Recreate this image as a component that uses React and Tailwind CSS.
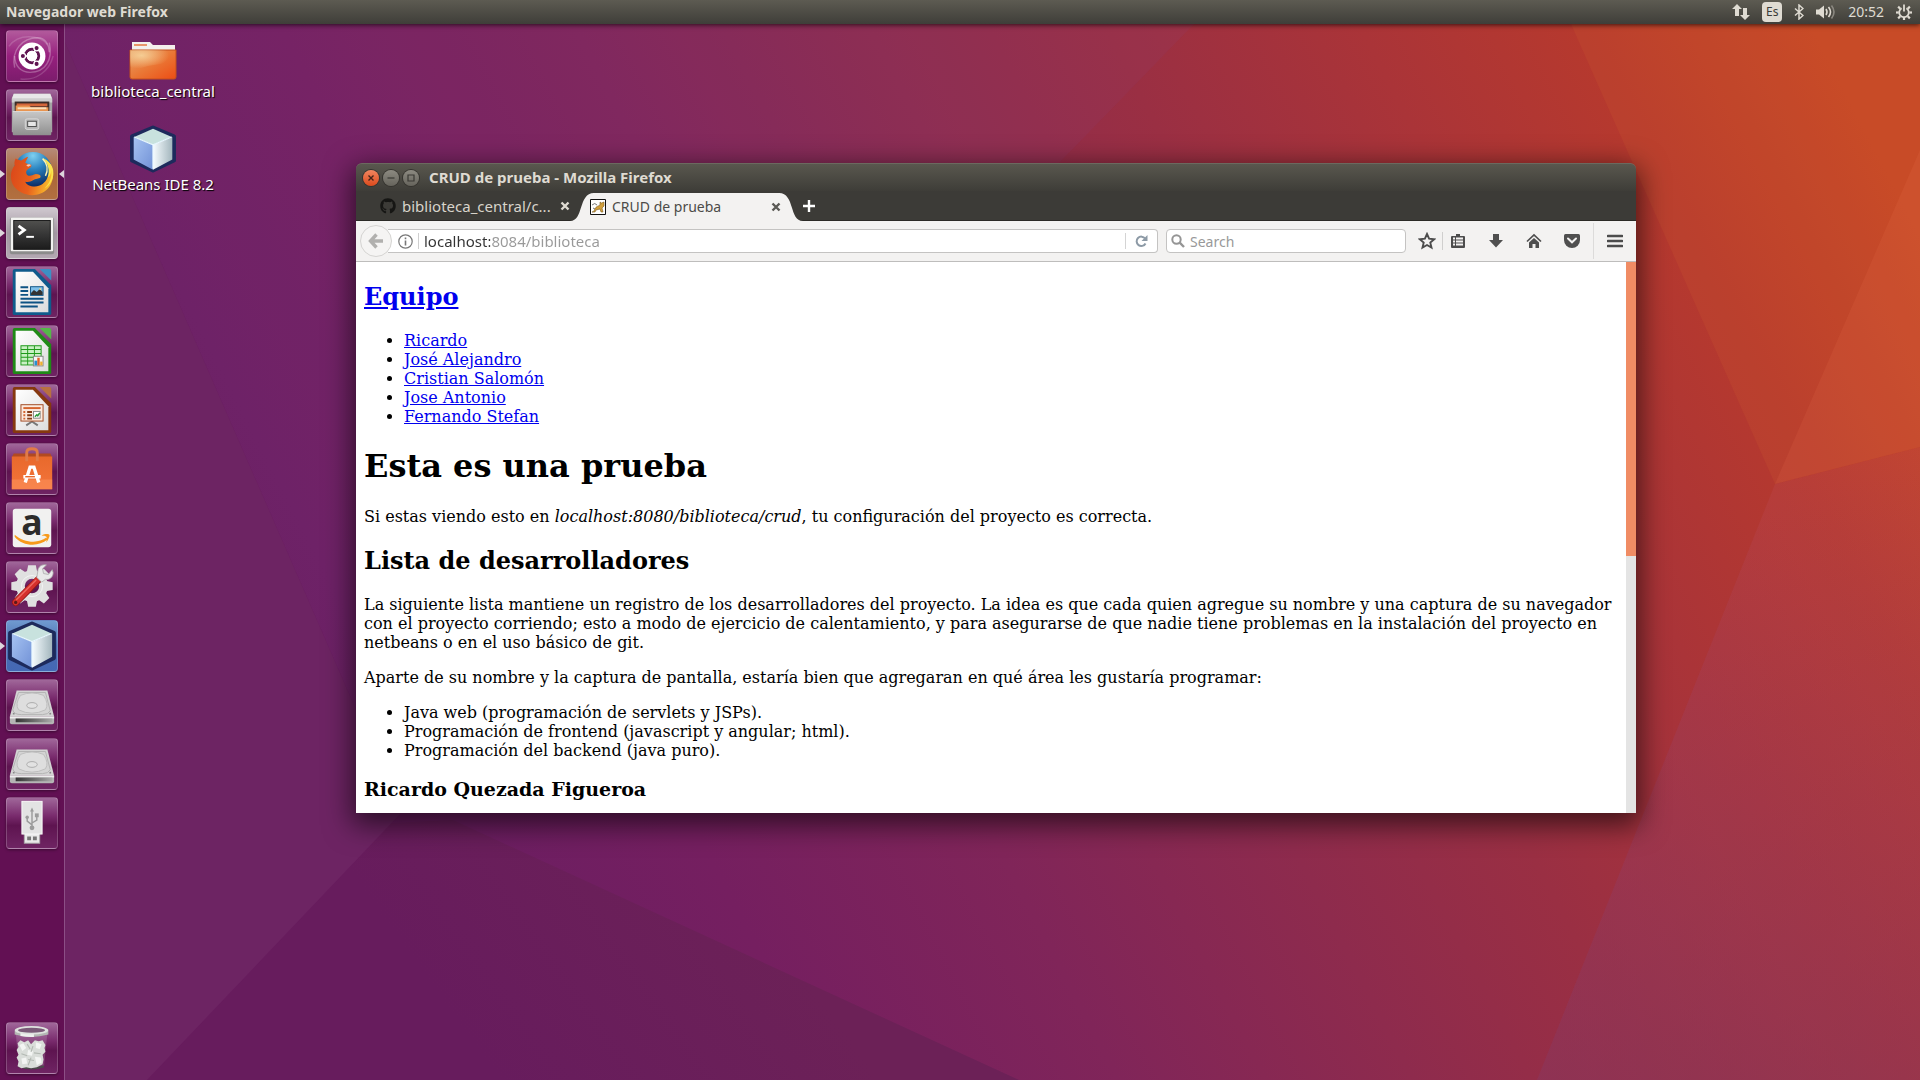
import React from "react";
import { FaGithub } from "react-icons/fa";

const UI = "font-['Noto_Sans','Open_Sans',sans-serif]";

function Wallpaper() {
  return (
    <svg className="absolute inset-0 h-full w-full" viewBox="0 0 1920 1080" preserveAspectRatio="none" aria-hidden="true">
      <defs>
        <linearGradient id="wall" gradientUnits="userSpaceOnUse" x1="300" y1="900" x2="1850" y2="100">
          <stop offset="0" stopColor="#671b5d" />
          <stop offset=".1" stopColor="#6c1e62" />
          <stop offset=".22" stopColor="#751f60" />
          <stop offset=".37" stopColor="#802559" />
          <stop offset=".52" stopColor="#8e2b4d" />
          <stop offset=".64" stopColor="#9a2f43" />
          <stop offset=".77" stopColor="#aa3438" />
          <stop offset=".88" stopColor="#b6392e" />
          <stop offset="1" stopColor="#c54626" />
        </linearGradient>
        <linearGradient id="wallEdge" gradientUnits="userSpaceOnUse" x1="500" y1="1080" x2="750" y2="900">
          <stop offset="0" stopColor="#671c5d" />
          <stop offset="1" stopColor="#6c2157" />
        </linearGradient>
        <linearGradient id="wallLow" gradientUnits="userSpaceOnUse" x1="0" y1="400" x2="0" y2="1080">
          <stop offset="0" stopColor="#8a3060" stopOpacity="0" />
          <stop offset="1" stopColor="#80305a" stopOpacity=".5" />
        </linearGradient>
      </defs>
      <rect width="1920" height="1080" fill="url(#wall)" />
      <polygon points="391,823 453,820 1019,1080 147,1080" fill="url(#wallEdge)" />
      <polygon points="57,24 1194,24 1059,163 600,600 401,813" fill="#8a50a0" opacity=".09" />
      <polygon points="0,0 47,0 57,24 401,813 147,1080 0,1080" fill="#6d2463" />
      <polygon points="1571,24 1920,24 1920,447 1775,484" fill="#e07030" opacity=".12" />
      <polygon points="1920,150 1920,447 1775,484" fill="#ff8a60" opacity=".1" />
      <polygon points="1775,484 1920,447 1920,1080 1537,1080" fill="#ff9090" opacity=".08" />
      <polygon points="1775,484 1920,447 1920,1080 1537,1080" fill="url(#wallLow)" />
    </svg>
  );
}

/* ---------- launcher drawings, all on a 52 x 52 grid ---------- */

function UbuntuIcon() {
  return (
    <svg viewBox="0 0 52 52" className="size-full">
      <g fill="none" stroke="#fff" strokeOpacity=".28" strokeWidth="1.500">
        <path d="M8 38C4 20 16 7 32 7c8 0 12 8 12 15" />
        <path d="M44 12c4 18-4 31-20 31C14 43 8 36 8 26" />
        <path d="M2 16C12 2 34 4 42 14M14 50c16 2 30-8 34-24" strokeOpacity=".16" />
      </g>
      <circle cx="26" cy="26" r="14" fill="#fff" />
      <circle cx="26" cy="26" r="7" fill="none" stroke="#5f1350" strokeWidth="3" />
      <path d="M26 26H14M26 26l6-10.400M26 26l6 10.400" stroke="#fff" strokeWidth="1.500" />
      <circle cx="26" cy="26" r="5.500" fill="#fff" />
      <g stroke="#fff" strokeWidth="1.400" fill="#5f1350">
        <circle cx="16.500" cy="26" r="2.800" />
        <circle cx="30.800" cy="17.800" r="2.800" />
        <circle cx="30.800" cy="34.200" r="2.800" />
      </g>
    </svg>
  );
}

function FilesIcon() {
  return (
    <svg viewBox="0 0 52 52" className="size-full">
      <defs>
        <linearGradient id="cab" x1="0" y1="0" x2="0" y2="1">
          <stop offset="0" stopColor="#c8c8c8" />
          <stop offset="1" stopColor="#8f8f8f" />
        </linearGradient>
      </defs>
      <path d="M7 4h38l2 5v35H5V9z" fill="#a4a4a4" />
      <path d="M7 4h38l2 5H5z" fill="#e8e8e8" />
      <path d="M5 9h42v4H5z" fill="#cfcfcf" />
      <rect x="8" y="12" width="36" height="10" fill="#3b2c28" />
      <rect x="10" y="14" width="32" height="3" fill="#d4663a" />
      <path d="M9 16h14l2 2h18v5H9z" fill="#e89450" />
      <rect x="11" y="18" width="30" height="2" fill="#fbe0bb" />
      <rect x="6" y="22" width="40" height="25" rx="1" fill="url(#cab)" />
      <path d="M6 22h40v1H6z" fill="#e2e2e2" />
      <rect x="19" y="30" width="14" height="11" rx="2" fill="#b7b7b7" stroke="#d9d9d9" />
      <rect x="21.500" y="32.500" width="9" height="5.500" fill="#e6e6e6" stroke="#4a4a4a" />
    </svg>
  );
}

function FirefoxIcon() {
  return (
    <svg viewBox="0 0 52 52" className="size-full">
      <defs>
        <radialGradient id="globe" cx=".5" cy=".1" r=".9">
          <stop offset="0" stopColor="#7fd0f0" />
          <stop offset=".4" stopColor="#2a83c0" />
          <stop offset=".9" stopColor="#0c2a63" />
        </radialGradient>
        <linearGradient id="fox" x1="0" y1="0" x2="1" y2=".2">
          <stop offset="0" stopColor="#d9451a" />
          <stop offset=".55" stopColor="#e8601c" />
          <stop offset="1" stopColor="#f8b82c" />
        </linearGradient>
      </defs>
      <circle cx="27" cy="23" r="20" fill="url(#globe)" />
      <path d="M9 10c-1.500 3-1.500 5-1 7-4.500 6-5 13-2 20 4 7 12 11 20 11 13 0 22-9 22-22 0-5-2-10-5-13 2 5 2 12-1 17-2 5-7 9-13 9-5 0-9-2-10-5 4 1 7-1 9-2 3-2 6-1 7-3 0-2-2-3-5-3-4 1-6 3-9 1-2-3-1-5 2-7 2-1 3-2 2-4-3 0-5-1-6-2 1-2 2-4 3-6-3 1-6 3-7 4-2 0-4-1-6-2z" fill="url(#fox)" />
      <path d="M37 9c6 6 8 14 5 21 3-2 4-5 4-8 1 8-2 14-7 19 7-4 10-11 9-19-1-6-5-10-11-13z" fill="#fbe44e" />
      <path d="M37 10c5 5 6 12 3 18" fill="none" stroke="#fff4b0" strokeWidth="1.500" />
      <path d="M20 17c2-1.500 4-1.500 5 0l-3 1.500z" fill="#fff" opacity=".7" />
    </svg>
  );
}

function TerminalIcon() {
  return (
    <svg viewBox="0 0 52 52" className="size-full">
      <defs>
        <linearGradient id="term" x1="0" y1="0" x2="0" y2="1">
          <stop offset="0" stopColor="#50504e" />
          <stop offset=".5" stopColor="#353535" />
          <stop offset="1" stopColor="#1c1c1c" />
        </linearGradient>
      </defs>
      <rect x="3" y="10" width="46" height="38" rx="2" fill="#8c8c8c" />
      <rect x="4" y="10" width="44" height="35" rx="1" fill="#f2f2f0" />
      <rect x="7" y="13" width="38" height="30" fill="url(#term)" stroke="#1a1a1a" />
      <path d="M12 18.500 18 23l-6 4.500" fill="none" stroke="#fff" strokeWidth="3" />
      <path d="M20 30h8" stroke="#fff" strokeWidth="2" />
    </svg>
  );
}

function OfficeSheet({ frame, fold, id, children }) {
  return (
    <svg viewBox="0 0 52 52" className="size-full">
      <defs>
        <linearGradient id={id} x1="0" y1="0" x2="1" y2="1">
          <stop offset="0" stopColor="#ffffff" />
          <stop offset="1" stopColor="#dcdcdc" />
        </linearGradient>
      </defs>
      <path d="M8 2h21l17 17v29a2 2 0 0 1-2 2H8a2 2 0 0 1-2-2V4a2 2 0 0 1 2-2z" fill={frame} />
      <path d="M34 2h10a2 2 0 0 1 2 2v10z" fill={fold} />
      <path d="M9 5h18l16 17v25H9z" fill={`url(#${id})`} />
      {children}
    </svg>
  );
}

function WriterIcon() {
  return (
    <OfficeSheet frame="#0f5b8c" fold="#3d8fc4" id="sheetW">
      <path d="M14 21h8M14 25h8M14 29h8M14 33h24M14 37h24M14 41h18" stroke="#0e5384" strokeWidth="2" />
      <rect x="24.500" y="20.500" width="13" height="9" fill="#7fc0ea" stroke="#0e5384" />
      <path d="M25 29v-2l3-3 3 2 3-3 3 3v3z" fill="#333" />
      <circle cx="34.500" cy="23" r="1" fill="#ffe27a" />
    </OfficeSheet>
  );
}

function CalcIcon() {
  return (
    <OfficeSheet frame="#1f8a16" fold="#55b848" id="sheetC">
      <rect x="14" y="20" width="22" height="21" fill="#1f9a1a" />
      <g fill="#c9f0c4">
        <path d="M15 21h6v3h-6zM22 21h6v3h-6zM29 21h6v3h-6zM15 25h6v3h-6zM22 25h6v3h-6zM29 25h6v3h-6zM15 29h6v3h-6zM22 29h6v3h-6zM29 29h6v3h-6zM15 33h6v3h-6zM22 33h6v3h-6zM15 37h6v3h-6zM22 37h6v3h-6z" />
      </g>
      <rect x="27.500" y="31.500" width="10" height="10" fill="#f6f6f6" stroke="#888" />
      <path d="M28.500 36h3v5h-3z" fill="#2a8fd0" />
      <path d="M31.500 33h2.500v8h-2.500z" fill="#e2622a" />
      <path d="M34.500 37h2.500v4h-2.500z" fill="#f0b030" />
    </OfficeSheet>
  );
}

function ImpressIcon() {
  return (
    <OfficeSheet frame="#86380f" fold="#b87040" id="sheetI">
      <path d="m20 42 6-4 6 4" fill="none" stroke="#777" strokeWidth="2" />
      <rect x="14.500" y="20.500" width="23" height="17" fill="#fbeadf" stroke="#a04820" />
      <path d="M17 24h18" stroke="#d4642e" strokeWidth="2" />
      <path d="M17 28h2M17 31.500h2M17 35h2" stroke="#d4642e" strokeWidth="2" />
      <path d="M21 28h5M21 31.500h5M21 35h5" stroke="#863a14" strokeWidth="2" />
      <rect x="27.500" y="27.500" width="7" height="7" fill="#fff" stroke="#888" />
      <path d="m29 33 2-2 1 1 2-3" fill="none" stroke="#2a9a3a" strokeWidth="1.500" />
    </OfficeSheet>
  );
}

function SoftwareIcon() {
  return (
    <svg viewBox="0 0 52 52" className="size-full">
      <defs>
        <linearGradient id="bag" x1="0" y1="0" x2="0" y2="1">
          <stop offset="0" stopColor="#e8692c" />
          <stop offset="1" stopColor="#f4743a" />
        </linearGradient>
      </defs>
      <path d="M7 10h38l2 4H5z" fill="#b24a20" />
      <path d="M5 13h42v34H5z" fill="url(#bag)" />
      <path d="M5 37h42v10H5z" fill="#fa8c55" opacity=".7" />
      <path d="M20.500 18V9q0-4 5.500-4t5.500 4v9" fill="none" stroke="#e07a48" strokeWidth="3" />
      <path d="m19 40 5-16h4l5 16M17 34h18" fill="none" stroke="#fff" strokeWidth="3.500" />
      <path d="M19 34h10" stroke="#e8692c" strokeWidth="1.500" />
    </svg>
  );
}

function AmazonIcon() {
  return (
    <svg viewBox="0 0 52 52" className="size-full overflow-visible">
      <rect x="6" y="6" width="40" height="40" rx="3" fill="#f1f1f0" />
      <text x="26" y="33" textAnchor="middle" fontFamily="Open Sans, sans-serif" fontWeight="700" fontSize="37" fill="#2b2b2b">a</text>
      <path d="M8 33c9 8 24 10 33 3l1 2C33 46 16 45 8 35z" fill="#f79a1c" />
      <path d="M36 34c3-2 7-2 8-1s-1 5-3 8c0-3 1-5 0-6s-3-1-5-1z" fill="#f79a1c" />
    </svg>
  );
}

function SettingsIcon() {
  return (
    <svg viewBox="0 0 52 52" className="size-full">
      <g fill="#e0e0e0">
        {[0, 45, 90, 135, 180, 225, 270, 315].map((a) => (
          <path key={a} d="M20.500 11 22 3.500h8l1.500 7.500z" transform={`rotate(${a} 26 25)`} />
        ))}
      </g>
      <circle cx="26" cy="25" r="12" fill="none" stroke="#e0e0e0" strokeWidth="9" />
      <circle cx="26" cy="25" r="11" fill="none" stroke="#f4f4f4" strokeWidth="1" />
      <path d="M9 42 33 18" stroke="#8f1616" strokeWidth="7.500" strokeLinecap="round" />
      <path d="M9 42 33 17.500" stroke="#d4302c" strokeWidth="6" strokeLinecap="round" />
      <path d="M10 39 30 19" stroke="#ef6a60" strokeWidth="1.500" strokeLinecap="round" />
      <circle cx="9" cy="42" r="1.700" fill="#5a1818" />
      <path d="m31 16 5 5 4-3c4 1 8-2 8-7l-1-3-4 5-5-1-1-5 4-4c-5-1-9 2-9 7z" fill="#e9e9e9" stroke="#aaa" strokeWidth=".8" />
    </svg>
  );
}

function CubeIcon({ id }) {
  return (
    <svg viewBox="1 1 46 46" className="size-full">
      <defs>
        <linearGradient id={`${id}L`} x1="0" y1="0" x2="1" y2="1">
          <stop offset="0" stopColor="#a6c3f2" />
          <stop offset="1" stopColor="#7191d6" />
        </linearGradient>
        <linearGradient id={`${id}R`} x1="0" y1="0" x2="1" y2="0">
          <stop offset="0" stopColor="#f6fcff" />
          <stop offset="1" stopColor="#a3b6bd" />
        </linearGradient>
      </defs>
      <path d="M24 3.500 44 12v23L24 44.500 4 35V12z" fill="#1d2a5c" stroke="#1d2a5c" strokeWidth="4" strokeLinejoin="round" />
      <path d="M24 4.500 42 12.500 24 20 6 12.500z" fill="#c8e2de" />
      <path d="M5.500 12.500 24 20v24L5.500 34z" fill={`url(#${id}L)`} />
      <path d="M42.500 12.500 24 20v24l18.500-10z" fill={`url(#${id}R)`} />
      <path d="M6 12.500 24 20l18-7.500M24 20v23" fill="none" stroke="#e9f8ff" strokeWidth="1.200" />
    </svg>
  );
}

function DriveIcon({ id }) {
  return (
    <svg viewBox="0 0 52 52" className="size-full">
      <defs>
        <linearGradient id={id} x1="0" y1="0" x2="1" y2="0">
          <stop offset="0" stopColor="#333" />
          <stop offset=".6" stopColor="#777" />
          <stop offset="1" stopColor="#aaa" />
        </linearGradient>
      </defs>
      <path d="M3 38h46v6q0 2-2 2H5q-2 0-2-2z" fill="#b5b5b5" />
      <path d="M10 11h32l7 27H3z" fill="#d4d4d4" />
      <path d="M3 38h46v2H3z" fill="#ededed" />
      <path d="M9 40h38v4H9z" fill={`url(#${id})`} />
      <path d="M12 13h28l5 19q-2 4-8 4H15q-8 0-9-5z" fill="none" stroke="#b3b3b3" />
      <path d="M14 16q12-5 24 0 6 9 2 15-14 7-28 0-4-6 2-15z" fill="#dedede" stroke="#bdbdbd" />
      <ellipse cx="26" cy="26.500" rx="5.500" ry="3" fill="#e2e2e2" stroke="#aaa" />
      <circle cx="7" cy="35" r="1" fill="#888" />
      <circle cx="45" cy="35" r="1" fill="#888" />
    </svg>
  );
}

function UsbIcon() {
  return (
    <svg viewBox="0 0 52 52" className="size-full">
      <rect x="18" y="36" width="16" height="11" fill="#e9e9e9" stroke="#aaa" />
      <path d="M21 40h4v4h-4zM27 40h4v4h-4z" fill="#777" />
      <rect x="15.500" y="3.500" width="21" height="34" fill="#e3e3e3" stroke="#fafafa" />
      <g stroke="#9b9b9b" strokeWidth="1.500" fill="none">
        <path d="M26 31V13M26 28l-5-4v-4M26 26l5-3v-4" />
      </g>
      <path d="m26 10 2 4h-4z" fill="#9b9b9b" />
      <circle cx="26" cy="31" r="2.500" fill="#9b9b9b" />
      <circle cx="21" cy="20" r="1.800" fill="#9b9b9b" />
      <path d="M29 16h4v4h-4z" fill="#9b9b9b" />
    </svg>
  );
}

function TrashIcon() {
  return (
    <svg viewBox="0 0 52 52" className="size-full">
      <path d="M9 10 12.500 45q13 4 26 0L42 10z" fill="#fff" opacity=".16" />
      <path d="M12.500 45q13 4.500 26 0" fill="none" stroke="#4b4b4b" strokeWidth="2" />
      <path d="m11 21 3-3 4 2 4-2 3 4 4-4 4 1 4-1 3 5-1 3 1 4-3 3 1 5-1 5-6 3-6 1-5-1-5 1-4-2 1-5-2-4 2-3-2-5 2-3z" fill="#d9ddd9" />
      <path d="M13 23l4-2 3 5-4 3zM30 20l6 2-2 5-4-1zM22 28l5 1-1 5-5-1zM15 37l5-1 1 6-5 1zM29 35l6 1 1 5-5 3z" fill="#f3f5f3" />
      <path d="M21 22l3 5M27 24l-2 6M15 32l6 2M28 31l7 1M22 38l6 1M25 36l-3 8" stroke="#b3b9b3" strokeWidth="1.200" />
      <path d="M8 8v4q17 5 35 0V8z" fill="#b4b8b4" />
      <path d="M14 10v3.500q8 1.500 14 1V10z" fill="#eef0ee" />
      <ellipse cx="25.500" cy="7.500" rx="17.500" ry="4.500" fill="#dfe2df" />
      <ellipse cx="25.500" cy="7.500" rx="14" ry="2.600" fill="#7a5a78" />
    </svg>
  );
}

const GLASS = "bg-[linear-gradient(to_bottom,#a0679a,#7a2c6e_35%,#5e1450_55%,#6f2463)]";

const LAUNCHER = [
  { name: "Buscar en el equipo", tile: "bg-[linear-gradient(to_bottom,#b25a9c,#97207e_50%,#7c1c6c)]", icon: <UbuntuIcon /> },
  { name: "Archivos", tile: GLASS, icon: <FilesIcon /> },
  { name: "Navegador web Firefox", tile: "bg-[linear-gradient(to_bottom,#b58a78,#ab6638_50%,#b27040)]", icon: <FirefoxIcon />, running: true, focused: true },
  { name: "Terminal", tile: "bg-[linear-gradient(to_bottom,#cfc8cf,#a397a2_50%,#b3a8b2)]", icon: <TerminalIcon />, running: true },
  { name: "LibreOffice Writer", tile: GLASS, icon: <WriterIcon /> },
  { name: "LibreOffice Calc", tile: GLASS, icon: <CalcIcon /> },
  { name: "LibreOffice Impress", tile: GLASS, icon: <ImpressIcon /> },
  { name: "Software de Ubuntu", tile: GLASS, icon: <SoftwareIcon /> },
  { name: "Amazon", tile: GLASS, icon: <AmazonIcon /> },
  { name: "Configuración del sistema", tile: GLASS, icon: <SettingsIcon /> },
  { name: "NetBeans", tile: "bg-[linear-gradient(to_bottom,#6f9ad0,#4a6cb0_50%,#4468b4)]", icon: <CubeIcon id="nbDock" />, running: true },
  { name: "Disco 1", tile: GLASS, icon: <DriveIcon id="drv1" /> },
  { name: "Disco 2", tile: GLASS, icon: <DriveIcon id="drv2" /> },
  { name: "Memoria USB", tile: GLASS, icon: <UsbIcon /> },
];

function LauncherItem({ item }) {
  return (
    <div className="relative flex w-full justify-center">
      {item.running && (
        <svg className="absolute left-0 top-[22px] h-2 w-[5px]" viewBox="0 0 5 8" aria-hidden="true">
          <path d="M0 0 5 4 0 8z" fill="#ddd6dc" />
        </svg>
      )}
      <button aria-label={item.name} className={`size-[52px] rounded border border-white/20 shadow-[0_1px_3px_rgba(0,0,0,.4)] ${item.tile}`}>
        {item.icon}
      </button>
      {item.focused && (
        <svg className="absolute right-0 top-[22px] h-2 w-[5px]" viewBox="0 0 5 8" aria-hidden="true">
          <path d="M5 0 0 4l5 4z" fill="#ddd6dc" />
        </svg>
      )}
    </div>
  );
}

function Launcher() {
  return (
    <nav aria-label="Lanzador" className="flex w-[65px] shrink-0 flex-col justify-between border-r border-[#8c4f86] bg-[#621053] pb-1.5 pt-1.5">
      <div className="flex flex-col gap-[7px]">
        {LAUNCHER.map((item) => (
          <LauncherItem key={item.name} item={item} />
        ))}
      </div>
      <LauncherItem item={{ name: "Papelera", tile: GLASS, icon: <TrashIcon /> }} />
    </nav>
  );
}

/* ---------- top panel ---------- */

function TopPanel() {
  return (
    <header className={`relative z-10 flex h-6 shrink-0 items-center justify-between bg-[linear-gradient(to_bottom,#5d5b52,#3f3e39)] pl-1.5 pr-2 text-[#dfdbd2] shadow-[0_1px_5px_rgba(0,0,0,.7)] ${UI}`}>
      <span className="text-sm font-bold">Navegador web Firefox</span>
      <div className="flex items-center gap-3">
        <svg className="h-4 w-[18px]" viewBox="0 0 18 16" aria-label="Red" fill="#dfdbd2">
          <path d="M5 0 10 5H7v7H3V5H0zM13 16l-5-5h3V4h4v7h3z" />
        </svg>
        <span className="flex h-5 w-5 items-center justify-center rounded-sm bg-[#dfdbd2] text-xs text-[#3c3b37]">Es</span>
        <svg className="h-4 w-[10px]" viewBox="0 0 10 16" aria-label="Bluetooth">
          <path d="M1 4.500 9 11.500 5 15V1l4 3.500-8 7" fill="none" stroke="#dfdbd2" strokeWidth="1.500" />
        </svg>
        <svg className="h-4 w-5" viewBox="0 0 20 16" aria-label="Volumen">
          <path d="M0 5.500h3l5-4v13l-5-4H0z" fill="#dfdbd2" />
          <path d="M10 5q2 3 0 6M12.500 3q4 5 0 10" fill="none" stroke="#dfdbd2" strokeWidth="1.600" />
          <path d="M15.500 1.500q5 6.500 0 13" fill="none" stroke="#8b8880" strokeWidth="1.600" />
        </svg>
        <span className="text-sm">20:52</span>
        <svg className="size-4" viewBox="0 0 16 16" aria-label="Sesión">
          <g stroke="#dfdbd2" fill="none">
            {[45, 90, 135, 180, 225, 270, 315].map((a) => (
              <path key={a} d="M8 3.200V.200" strokeWidth="2.200" transform={`rotate(${a} 8 8.500)`} />
            ))}
            <path d="M8 .5v7" strokeWidth="1.800" />
            <path d="M5.600 4.300a4.800 4.800 0 1 0 4.800 0" strokeWidth="1.800" />
          </g>
        </svg>
      </div>
    </header>
  );
}

/* ---------- desktop icons ---------- */

function DesktopIcon({ label, children }) {
  return (
    <button className="flex flex-col items-center">
      <span className="block size-12">{children}</span>
      <span className={`h-[22px] text-[15px] leading-[22px] text-white [text-shadow:1px_1px_1px_#000] ${UI}`}>{label}</span>
    </button>
  );
}

function FolderIcon() {
  return (
    <svg viewBox="0 0 48 48" className="size-full">
      <defs>
        <linearGradient id="folder" x1="0" y1="0" x2="1" y2="1">
          <stop offset="0" stopColor="#e8a066" />
          <stop offset=".5" stopColor="#ea7836" />
          <stop offset="1" stopColor="#ec4c14" />
        </linearGradient>
        <radialGradient id="folderGlow" cx=".25" cy=".25" r=".6">
          <stop offset="0" stopColor="#f8dca4" stopOpacity=".8" />
          <stop offset="1" stopColor="#f8dca4" stopOpacity="0" />
        </radialGradient>
      </defs>
      <path d="M3 10h18l3 3h22v8H3z" fill="#f3efec" />
      <path d="M5 12h13v2H5z" fill="#e9946a" />
      <path d="M1 18h46v27q0 2-2 2H3q-2 0-2-2z" fill="url(#folder)" stroke="#c2501c" />
      <path d="M1 18h46v12Q20 32 1 40z" fill="url(#folderGlow)" />
    </svg>
  );
}

/* ---------- Firefox window ---------- */

function TitleBar() {
  return (
    <div className="flex h-7 shrink-0 items-center gap-1 rounded-t-md border-t border-[#6b695f] bg-[linear-gradient(to_bottom,#59574e,#3e3d38)] px-[7px]">
      <button aria-label="Cerrar" className="size-4 rounded-full bg-[linear-gradient(to_bottom,#f28660,#dc4a1c)] shadow-[0_0_0_1px_#34332e]">
        <svg viewBox="0 0 16 16"><path d="m5.500 5.500 5 5m0-5-5 5" stroke="#43241a" strokeWidth="1.400" /></svg>
      </button>
      <button aria-label="Minimizar" className="size-4 rounded-full bg-[linear-gradient(to_bottom,#8c8a81,#66645c)] shadow-[0_0_0_1px_#34332e]">
        <svg viewBox="0 0 16 16"><path d="M4.500 8h7" stroke="#3a3934" strokeWidth="1.200" /></svg>
      </button>
      <button aria-label="Maximizar" className="size-4 rounded-full bg-[linear-gradient(to_bottom,#8c8a81,#66645c)] shadow-[0_0_0_1px_#34332e]">
        <svg viewBox="0 0 16 16"><path d="M5 5h6v6H5z" fill="none" stroke="#3a3934" strokeWidth="1.200" /></svg>
      </button>
      <span className="pl-1.5 text-[15px] font-bold text-[#dfdbd2]">CRUD de prueba - Mozilla Firefox</span>
    </div>
  );
}

function CloseCross({ color }) {
  return (
    <svg className="size-2.5" viewBox="0 0 10 10">
      <path d="m1.500 1.500 7 7m0-7-7 7" stroke={color} strokeWidth="2.400" />
    </svg>
  );
}

function TabStrip() {
  return (
    <div className="flex h-[30px] shrink-0 items-end border-b border-[#2b2a26] bg-[#3c3b37]">
      <div className="flex h-7 w-[214px] items-center pl-6">
        <FaGithub className="size-4 shrink-0 text-[#161614]" />
        <button className="w-[165px] whitespace-nowrap pl-1.5 text-left text-[15px] text-[#d8d4cb]">biblioteca_central/c...</button>
        <button aria-label="Cerrar pestaña"><CloseCross color="#dfdbd2" /></button>
      </div>
      <div className="relative -mb-px flex h-7 w-[233px] items-center pl-5 pr-[22px]">
        <div className="absolute inset-0 flex" aria-hidden="true">
          <svg className="h-full w-6" viewBox="0 0 24 28">
            <path d="M0 28C14 28 8 0 24 0v28z" fill="#f3f2f1" />
          </svg>
          <div className="-mx-px flex-1 bg-[#f3f2f1]" />
          <svg className="h-full w-6" viewBox="0 0 24 28">
            <path d="M24 28C10 28 16 0 0 0v28z" fill="#f3f2f1" />
          </svg>
        </div>
        <svg className="relative size-4" viewBox="0 0 16 16" aria-hidden="true">
          <path d="M.5.500h15v15H.5z" fill="#fff" stroke="#111" />
          <path d="M2 13c2 0 2-2 3-3 1-3 4-3 5-4V3l1.500 1L14 3v4l-2 2 1 4h-2l-1-3-4 1-1 2z" fill="#d2a03c" stroke="#7a5a22" strokeWidth=".6" />
          <path d="M2 6q3-3 5 0M3 9l2 1" fill="none" stroke="#777" />
        </svg>
        <button className="relative flex-1 whitespace-nowrap pl-1.5 text-left text-sm text-[#4c4b48]">CRUD de prueba</button>
        <button aria-label="Cerrar pestaña" className="relative"><CloseCross color="#5a5955" /></button>
      </div>
      <button aria-label="Nueva pestaña" className="flex h-7 items-center">
        <svg className="size-3" viewBox="0 0 12 12"><path d="M6 0v12M0 6h12" stroke="#fff" strokeWidth="2.400" /></svg>
      </button>
    </div>
  );
}

function NavBar() {
  return (
    <div className="flex h-[41px] shrink-0 items-center border-b border-[#bebdbc] bg-[#f3f2f1] pl-1">
      <button aria-label="Atrás" className="relative flex size-8 shrink-0 items-center justify-center rounded-full border border-[#d5d4d2] bg-[#f5f4f3]">
        <svg className="size-4" viewBox="0 0 16 16">
          <path d="M8.500 1.500 2.500 8l6 6.500M3 8h12" fill="none" stroke="#b1b0ae" strokeWidth="3.400" />
        </svg>
      </button>
      <div className="-ml-1 flex h-6 flex-1 items-center rounded-r-sm border border-l-0 border-[#c4c3c2] bg-white">
        <button aria-label="Información del sitio" className="ml-2.5">
          <svg className="size-[15px]" viewBox="0 0 15 15">
            <circle cx="7.500" cy="7.500" r="6.700" fill="none" stroke="#777" strokeWidth="1.200" />
            <path d="M7.500 6.500v5M7.500 3.500v1.700" stroke="#777" strokeWidth="1.600" />
          </svg>
        </button>
        <span className="ml-[5px] h-4 w-px bg-[#cfcfcf]" />
        <input
          aria-label="Dirección"
          defaultValue="localhost:8084/biblioteca"
          className="ml-[5px] h-[22px] min-w-0 flex-1 bg-[linear-gradient(to_right,#333_66px,#999_66px)] bg-clip-text text-[15px] text-transparent outline-none"
        />
        <span className="h-4 w-px bg-[#d4d4d4]" />
        <button aria-label="Recargar" className="mx-[9px]">
          <svg className="size-[13px]" viewBox="0 0 13 13">
            <path d="M10.500 8.500a4.700 4.700 0 1 1-.4-5" fill="none" stroke="#8d9aa6" strokeWidth="2" />
            <path d="M12.500 0v6h-6z" fill="#8d9aa6" />
          </svg>
        </button>
      </div>
      <div className="ml-2 flex h-6 w-60 shrink-0 items-center rounded-sm border border-[#c4c3c2] bg-white pl-1">
        <svg className="size-3.5 shrink-0" viewBox="0 0 14 14" aria-hidden="true">
          <circle cx="5.500" cy="5.500" r="4.200" fill="none" stroke="#959595" strokeWidth="2" />
          <path d="m8.700 8.700 4.300 4.300" stroke="#959595" strokeWidth="2.400" />
        </svg>
        <input aria-label="Buscar" placeholder="Search" className="ml-[5px] h-[22px] min-w-0 flex-1 text-sm outline-none placeholder:text-[#999]" />
      </div>
      <div className="flex shrink-0 items-center">
        <button aria-label="Marcar esta página" className="ml-3">
          <svg className="size-[18px]" viewBox="0 0 18 18">
            <path d="m9 2 2.100 4.700 5.100.5-3.900 3.400 1.200 5L9 13l-4.500 2.600 1.200-5L1.800 7.200l5.100-.5z" fill="none" stroke="#4c4c4c" strokeWidth="1.900" />
          </svg>
        </button>
        <span className="ml-1.5 h-[18px] w-px bg-[#d0cfce]" />
        <button aria-label="Marcadores" className="ml-[7px]">
          <svg className="size-4" viewBox="0 0 16 16">
            <path d="M6 1h4v2h4q1 0 1 1v10q0 1-1 1H2q-1 0-1-1V4q0-1 1-1h4z" fill="#4c4c4c" />
            <path d="M3 5.500h2M6 5.500h7M3 8.500h2M6 8.500h7M3 11.500h2M6 11.500h7" stroke="#f3f2f1" strokeWidth="1.900" />
          </svg>
        </button>
        <button aria-label="Descargas" className="ml-[22px]">
          <svg className="size-4" viewBox="0 0 16 16"><path d="M5 1h6v6h4l-7 7.500L1 7h4z" fill="#4f4f4f" /></svg>
        </button>
        <button aria-label="Inicio" className="ml-[22px]">
          <svg className="size-4" viewBox="0 0 16 16">
            <path d="M1 8.500 8 2l7 6.500" fill="none" stroke="#4f4f4f" strokeWidth="1.700" />
            <path d="M3 9.500 8 5l5 4.500V15H9.500v-4h-3v4H3z" fill="#4f4f4f" />
          </svg>
        </button>
        <button aria-label="Pocket" className="ml-[22px]">
          <svg className="h-3.5 w-4" viewBox="0 0 16 14">
            <path d="M1.500 0h13Q16 0 16 1.500V6a8 8 0 0 1-16 0V1.500Q0 0 1.500 0z" fill="#4f4f4f" />
            <path d="m4 4.500 4 3.800 4-3.800" fill="none" stroke="#f3f2f1" strokeWidth="2" strokeLinecap="round" />
          </svg>
        </button>
        <span className="ml-[13px] h-9 w-px bg-[#dcdbda]" />
        <button aria-label="Abrir menú" className="ml-[13px] mr-[13px]">
          <svg className="size-4" viewBox="0 0 16 16">
            <path d="M1 3h14M1 8h14M1 13h14" stroke="#4c4c4c" strokeWidth="2.600" strokeLinecap="round" />
          </svg>
        </button>
      </div>
    </div>
  );
}

const TEAM = ["Ricardo", "José Alejandro", "Cristian Salomón", "Jose Antonio", "Fernando Stefan"];
const AREAS = [
  "Java web (programación de servlets y JSPs).",
  "Programación de frontend (javascript y angular; html).",
  "Programación del backend (java puro).",
];

function Page() {
  return (
    <div className="flex min-h-0 flex-1 bg-white">
      <article className="min-w-0 flex-1 overflow-hidden px-2 font-['DejaVu_Serif',serif] text-base leading-[19px] text-black">
        <h2 className="my-5 text-2xl font-bold leading-[29px]">
          <a href="#equipo" className="text-[#0000ee] underline">Equipo</a>
        </h2>
        <ul className="list-disc pl-10">
          {TEAM.map((name) => (
            <li key={name}>
              <a href="#equipo" className="text-[#0000ee] underline">{name}</a>
            </li>
          ))}
        </ul>
        <h1 className="mb-[22px] mt-[21px] text-[32px] font-bold leading-[38px]">Esta es una prueba</h1>
        <p>
          Si estas viendo esto en <em>localhost:8080/biblioteca/crud</em>, tu configuración del proyecto es correcta.
        </p>
        <h2 className="my-5 text-2xl font-bold leading-[29px]">Lista de desarrolladores</h2>
        <p>
          La siguiente lista mantiene un registro de los desarrolladores del proyecto. La idea es que cada quien agregue su
          nombre y una captura de su navegador con el proyecto corriendo; esto a modo de ejercicio de calentamiento, y para
          asegurarse de que nadie tiene problemas en la instalación del proyecto en netbeans o en el uso básico de git.
        </p>
        <p className="my-4">
          Aparte de su nombre y la captura de pantalla, estaría bien que agregaran en qué área les gustaría programar:
        </p>
        <ul className="list-disc pl-10">
          {AREAS.map((area) => (
            <li key={area}>{area}</li>
          ))}
        </ul>
        <h3 className="mt-[18px] text-[19px] font-bold leading-[22px]">Ricardo Quezada Figueroa</h3>
      </article>
      <div className="w-2.5 shrink-0 bg-[#e4e4e4]">
        <div className="h-[294px] bg-[#f08c64]" />
      </div>
    </div>
  );
}

export default function App() {
  return (
    <div className="relative flex h-screen flex-col overflow-hidden bg-[#6d2463]">
      <Wallpaper />
      <TopPanel />
      <div className="relative flex min-h-0 flex-1">
        <Launcher />
        <main className="relative flex-1">
          <div className="flex w-44 flex-col gap-[23px] pt-2">
            <DesktopIcon label="biblioteca_central"><FolderIcon /></DesktopIcon>
            <DesktopIcon label="NetBeans IDE 8.2"><CubeIcon id="nbDesk" /></DesktopIcon>
          </div>
          <section
            aria-label="CRUD de prueba - Mozilla Firefox"
            className={`absolute bottom-[267px] left-[291px] right-[284px] top-[139px] flex flex-col rounded-t-md shadow-[0_8px_28px_4px_rgba(0,0,0,.6)] ${UI}`}
          >
            <TitleBar />
            <TabStrip />
            <NavBar />
            <Page />
          </section>
        </main>
      </div>
    </div>
  );
}
